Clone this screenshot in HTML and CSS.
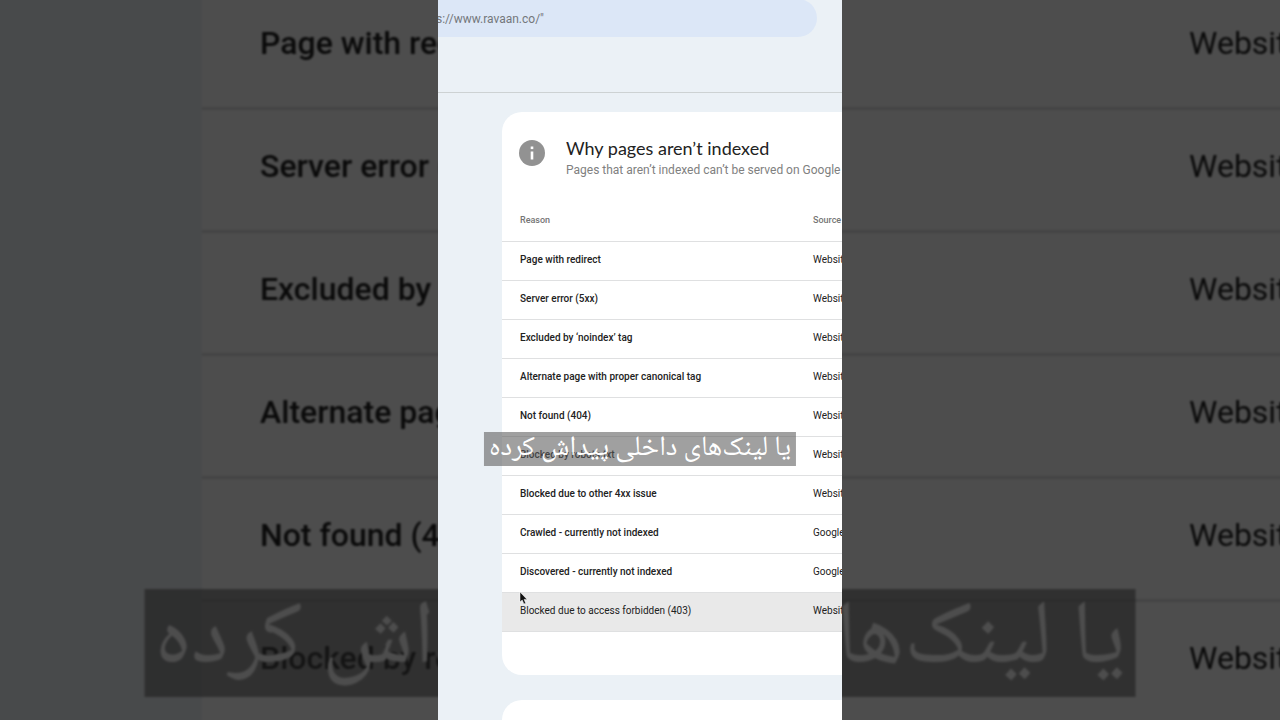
FILE: index.html
```html
<!DOCTYPE html>
<html lang="en">
<head>
<meta charset="utf-8">
<title>Why pages aren’t indexed</title>
<link rel="stylesheet" href="styles.css">
</head>
<body>
<div class="stage">
  <div class="backdrop" aria-hidden="true">
    <table class="reasons reasons-large">
      <tbody>
        <tr><td class="reason">Page with redirect</td><td>Website</td></tr>
        <tr><td class="reason">Server error (5xx)</td><td>Website</td></tr>
        <tr><td class="reason">Excluded by ‘noindex’ tag</td><td>Website</td></tr>
        <tr><td class="reason">Alternate page with proper canonical tag</td><td>Website</td></tr>
        <tr><td class="reason">Not found (404)</td><td>Website</td></tr>
        <tr><td class="reason">Blocked by robots.txt</td><td>Website</td></tr>
      </tbody>
    </table>
    <p class="caption caption-large" lang="fa" dir="rtl">یا لینک‌های داخلی پیداش کرده</p>
  </div>

  <main class="video">
    <header class="topbar">
      <input class="search" type="text" aria-label="Inspect URL" value="s://www.ravaan.co/&quot;">
    </header>
    <div class="content">
      <section class="card">
        <div class="card-head">
          <svg class="info" viewBox="0 0 26 26" aria-hidden="true">
            <circle cx="13" cy="13" r="13" fill="#929292"/>
            <rect x="11.700" y="11.500" width="2.600" height="8" fill="#fff"/>
            <rect x="11.700" y="6.500" width="2.600" height="2.600" fill="#fff"/>
          </svg>
          <div>
            <h1 class="title">Why pages aren’t indexed</h1>
            <p class="subtitle">Pages that aren’t indexed can’t be served on Google</p>
          </div>
        </div>
        <table class="reasons">
          <thead>
            <tr><th class="reason">Reason</th><th>Source</th></tr>
          </thead>
          <tbody>
            <tr><td class="reason">Page with redirect</td><td>Website</td></tr>
            <tr><td class="reason">Server error (5xx)</td><td>Website</td></tr>
            <tr><td class="reason">Excluded by ‘noindex’ tag</td><td>Website</td></tr>
            <tr><td class="reason">Alternate page with proper canonical tag</td><td>Website</td></tr>
            <tr><td class="reason">Not found (404)</td><td>Website</td></tr>
            <tr><td class="reason">Blocked by robots.txt</td><td>Website</td></tr>
            <tr><td class="reason">Blocked due to other 4xx issue</td><td>Website</td></tr>
            <tr><td class="reason">Crawled - currently not indexed</td><td>Google systems</td></tr>
            <tr><td class="reason">Discovered - currently not indexed</td><td>Google systems</td></tr>
            <tr class="hovered"><td class="reason">Blocked due to access forbidden (403)</td><td>Website</td></tr>
          </tbody>
        </table>
      </section>
      <section class="card card-next"></section>
    </div>
    <p class="caption" lang="fa" dir="rtl">یا لینک‌های داخلی پیداش کرده</p>
    <svg class="cursor" viewBox="0 0 9 14" aria-hidden="true">
      <path d="M1 1v10l2.2-2 1.7 4 1.8-.8-1.6-3.8h3z" fill="#111" stroke="#fff" stroke-width=".5"/>
    </svg>
  </main>
</div>
</body>
</html>
```
FILE: styles.css
```css
* {
  box-sizing: border-box;
}

body {
  margin: 0;
  background: #000;
  font-family: Roboto, "Liberation Sans", sans-serif;
  color: #222;
}

.stage {
  display: grid;
  grid-template-columns: 438fr 404fr 438fr;
  grid-template-rows: 100vh;
  overflow: hidden;
}

.backdrop {
  grid-area: 1 / 1 / 2 / 4;
  position: relative;
  overflow: hidden;
  padding-left: 202px;
  background: #eff4f8;
  opacity: .3;
}

.video {
  grid-area: 1 / 2 / 2 / 3;
  position: relative;
  overflow: hidden;
  background: #ebf1f6;
}

.topbar {
  height: 94px;
  padding-right: 25px;
  border-bottom: 1px solid #cdd2d3;
}

.search {
  display: block;
  width: calc(100% + 20px);
  height: 38px;
  margin: -1px 0 0 -20px;
  padding: 2px 20px 0 18px;
  border: 0;
  border-radius: 19px;
  background: #dce7f7;
  color: #74777b;
  font: 12px Roboto, "Liberation Sans", sans-serif;
}

.content {
  display: flex;
  flex-direction: column;
  gap: 25px;
  padding: 19px 0 0 64px;
}

.card {
  overflow: hidden;
  padding-bottom: 43px;
  border-radius: 20px 0 0 20px;
  background: #fff;
}

.card-next {
  min-height: 80px;
}

.card-head {
  display: flex;
  gap: 21px;
  height: 86px;
  padding: 25px 0 0 17px;
  white-space: nowrap;
}

.info {
  flex: none;
  width: 26px;
  height: 26px;
  margin-top: 3px;
}

.title {
  margin: 0;
  font-family: Lato, Roboto, sans-serif;
  font-size: 18px;
  line-height: 22px;
  font-weight: 400;
}

.subtitle {
  margin: 0;
  font-size: 12px;
  line-height: 22px;
  color: #808080;
}

.reasons {
  width: 100%;
  min-width: 420px;
  table-layout: fixed;
  border-collapse: separate;
  border-spacing: 0;
  background: #fff;
  font-size: 10px;
  text-align: left;
  white-space: nowrap;
}

.reasons th,
.reasons td {
  height: 39px;
  padding: 0 0 4px;
  border-bottom: 1px solid #dfe0e1;
}

.reasons th {
  height: 44px;
  padding: 0;
  font-size: 9px;
  font-weight: 500;
  color: #757575;
}

.reasons .reason {
  width: 311px;
  padding-left: 18px;
  font-weight: 500;
}

.reasons .hovered td {
  background: #e9e9e9;
  font-weight: 400;
}

.reasons-large {
  width: calc(100% + 20px);
  margin-top: -13px;
  font-size: 32px;
  filter: blur(1px);
}

.reasons-large td {
  height: 123px;
  padding-bottom: 8px;
  border-bottom-width: 3px;
}

.reasons-large .reason {
  width: 987px;
  padding-left: 58px;
}

.caption {
  position: absolute;
  top: 432px;
  left: 50%;
  transform: translateX(-50%);
  margin: 0;
  padding: 0 5px;
  background: rgba(92, 92, 92, .58);
  color: #fff;
  font-family: "Noto Naskh Arabic", "Noto Sans Arabic", "DejaVu Sans", serif;
  font-size: 28px;
  line-height: 34px;
  white-space: nowrap;
}

.caption-large {
  top: 589px;
  padding: 0 10px;
  font-size: 90px;
  line-height: 108px;
  filter: blur(1px);
}

.cursor {
  position: absolute;
  top: 591px;
  left: 81px;
  width: 9px;
  height: 14px;
}
```
